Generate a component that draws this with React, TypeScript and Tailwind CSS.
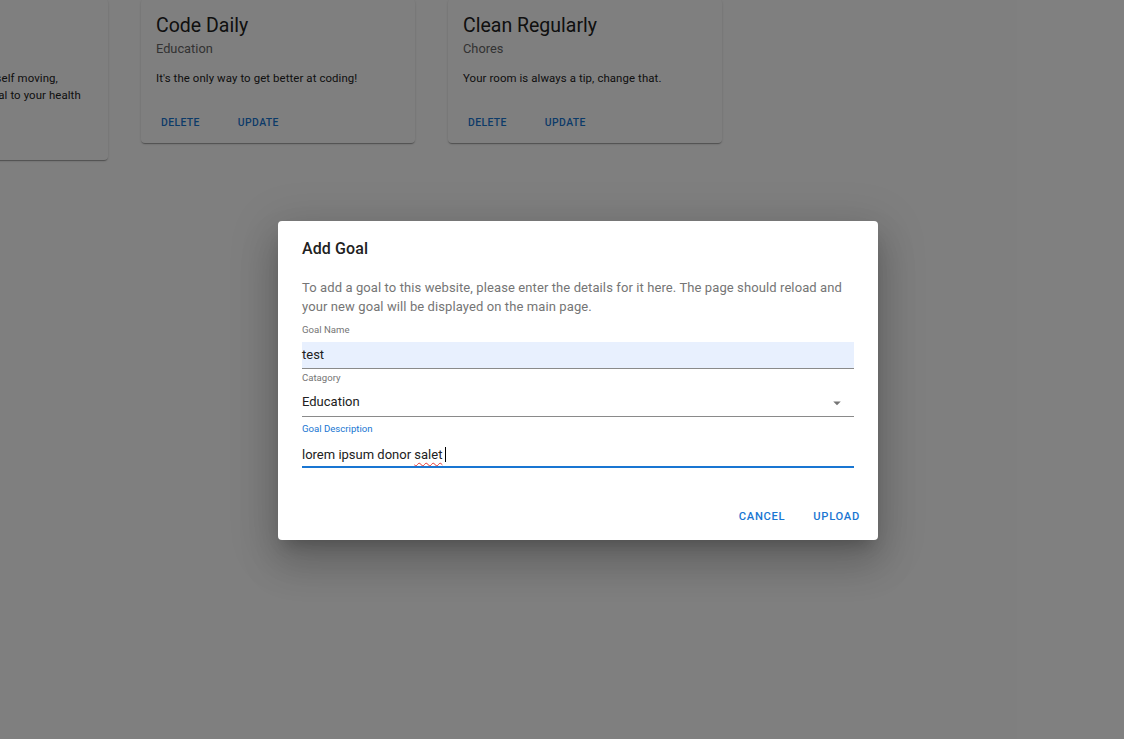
import { ReactNode } from "react";

type Goal = {
  title: string;
  category: string;
  lines: string[];
};

const goals: Goal[] = [
  {
    title: "Go Running",
    category: "Fitness",
    lines: ["Go out for a run to keep yourself moving,", "daily exercise is incredibly vital to your health"],
  },
  {
    title: "Code Daily",
    category: "Education",
    lines: ["It's the only way to get better at coding!"],
  },
  {
    title: "Clean Regularly",
    category: "Chores",
    lines: ["Your room is always a tip, change that."],
  },
];

function GoalCard({ goal }: { goal: Goal }) {
  return (
    <article className="w-[274px] shrink-0 rounded-[4px] bg-white shadow-[0_2px_1px_-1px_rgba(0,0,0,0.2),0_1px_1px_0_rgba(0,0,0,0.14),0_1px_3px_0_rgba(0,0,0,0.12)]">
      <div className="px-[15px] pt-[14px] pb-[10px]">
        <h5 className="text-[19.5px] leading-[26px] text-[#212121]">{goal.title}</h5>
        <p className="mt-[1px] text-[12.8px] leading-[18px] text-[#666]">{goal.category}</p>
        <p className="mt-[12px] text-[11.4px] leading-[17px] tracking-[0.1px] text-[#222]">
          {goal.lines.map((l, i) => (
            <span key={i} className="block whitespace-nowrap">
              {l}
            </span>
          ))}
        </p>
      </div>
      <div className="flex gap-[12px] px-[7px] pt-[14px] pb-[8px]">
        <CardButton>Delete</CardButton>
        <CardButton>Update</CardButton>
      </div>
    </article>
  );
}

function CardButton({ children }: { children: ReactNode }) {
  return (
    <button className="px-[13px] py-[2px] text-[10.4px] leading-[20px] font-medium uppercase tracking-[0.4px] text-[#1976d2]">
      {children}
    </button>
  );
}

function Label({ children, active }: { children: ReactNode; active?: boolean }) {
  return (
    <div
      className={
        active
          ? "text-[9.6px] leading-[12px] text-[#1976d2]"
          : "text-[9.6px] leading-[12px] text-[#757575]"
      }
    >
      {children}
    </div>
  );
}

function ChevronDown() {
  return (
    <svg width="18" height="18" viewBox="0 0 24 24" className="text-[#757575]">
      <path d="M7 10l5 5 5-5z" fill="currentColor" />
    </svg>
  );
}

export default function App() {
  return (
    <div
      className="relative h-[739px] w-[1124px] overflow-hidden bg-white"
      style={{ fontFamily: "Roboto, 'Liberation Sans', sans-serif" }}
    >
      <main className="-mt-[1px] ml-[-166px] flex items-start gap-[33px]">
        {goals.map((g) => (
          <GoalCard key={g.title} goal={g} />
        ))}
      </main>

      <div className="absolute inset-0 bg-black/50" />

      <section className="absolute left-[278px] top-[221px] w-[600px] rounded-[4px] bg-white shadow-[0_11px_15px_-7px_rgba(0,0,0,0.2),0_24px_38px_3px_rgba(0,0,0,0.14),0_9px_46px_8px_rgba(0,0,0,0.12)]">
        <h2 className="px-[24px] pt-[15px] text-[16px] leading-[26px] font-medium tracking-[0.1px] text-[#212121]">
          Add Goal
        </h2>

        <div className="px-[24px] pt-[16px]">
          <p className="text-[13px] leading-[19px] tracking-[0.1px] text-[#757575]">
            To add a goal to this website, please enter the details for it here. The page should reload and
            your new goal will be displayed on the main page.
          </p>

          <div className="mt-[8px]">
            <Label>Goal Name</Label>
            <div className="mt-[6px] h-[27px] border-b border-[#8a8a8a] bg-[#e8f0fe] text-[13px] leading-[26px] text-[#212121]">
              test
            </div>
          </div>

          <div className="mt-[3px]">
            <Label>Catagory</Label>
            <div className="flex h-[33px] items-center justify-between border-b border-[#8a8a8a] pt-[3px] text-[13px] text-[#212121]">
              <span>Education</span>
              <span className="mr-[8px] mt-[2px]">
                <ChevronDown />
              </span>
            </div>
          </div>

          <div className="mt-[6px]">
            <Label active>Goal Description</Label>
            <div className="flex h-[33px] items-center border-b-2 border-[#1976d2] pt-[8px] text-[13px] text-[#212121]">
              <span>lorem ipsum donor&nbsp;</span>
              <span className="underline decoration-wavy decoration-[#e53935] decoration-[1px] underline-offset-[3px]">
                salet
              </span>
              <span className="ml-[3px] h-[15px] w-[1px] bg-black" />
            </div>
          </div>
        </div>

        <div className="mt-[35px] flex justify-end gap-[8px] px-[8px] pb-[9px]">
          <button className="px-[10px] py-[5px] text-[11.2px] leading-[18px] font-medium uppercase tracking-[0.7px] text-[#1976d2]">
            Cancel
          </button>
          <button className="px-[10px] py-[5px] text-[11.2px] leading-[18px] font-medium uppercase tracking-[0.7px] text-[#1976d2]">
            Upload
          </button>
        </div>
      </section>
    </div>
  );
}
